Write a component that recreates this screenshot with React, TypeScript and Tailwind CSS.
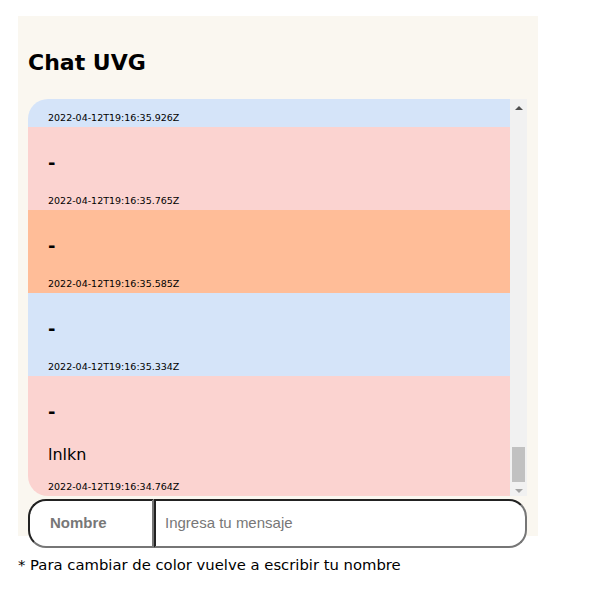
import React from 'react'

type Message = {
  name: string
  text?: string
  time: string
  color: string
}

const comic = { fontFamily: '"Comic Sans MS", "DejaVu Sans", sans-serif' }

const messages: Message[] = [
  { name: '-', time: '2022-04-12T19:16:35.926Z', color: 'bg-[#d5e4f9]' },
  { name: '-', time: '2022-04-12T19:16:35.765Z', color: 'bg-[#fbd3d0]' },
  { name: '-', time: '2022-04-12T19:16:35.585Z', color: 'bg-[#ffbd98]' },
  { name: '-', time: '2022-04-12T19:16:35.334Z', color: 'bg-[#d5e4f9]' },
  { name: '-', text: 'lnlkn', time: '2022-04-12T19:16:34.764Z', color: 'bg-[#fbd3d0]' },
]

const MessageRow = ({ msg }: { msg: Message }) => (
  <div className={`shrink-0 px-[20px] pt-[23px] pb-[3px] text-black ${msg.color}`}>
    <p className="text-[18px] font-bold leading-[25px]">{msg.name}</p>
    {msg.text && (
      <p className="mt-[20px] text-[16px] leading-[22px]">{msg.text}</p>
    )}
    <p className={`${msg.text ? 'mt-[15px]' : 'mt-[20px]'} text-[9.5px] leading-[12px]`}>
      {msg.time}
    </p>
  </div>
)

const ScrollBar = () => (
  <div className="flex w-[17px] shrink-0 flex-col items-center bg-[#f1f1f1]">
    <div className="flex h-[17px] w-full items-center justify-center">
      <div className="h-0 w-0 border-x-[4px] border-b-[4px] border-x-transparent border-b-[#505050]" />
    </div>
    <div className="flex flex-1 flex-col justify-end px-[2px] pb-[14px]">
      <div className="h-[35px] w-[13px] bg-[#c1c1c1]" />
    </div>
  </div>
)

export default function App() {
  return (
    <div className="min-h-screen bg-white" style={comic}>
      <div className="ml-[18px] mt-[16px] flex h-[520px] w-[520px] flex-col bg-[#faf7f0] pl-[10px] pr-[11px] pt-[32px]">
        <h1 className="text-[22px] font-bold leading-[30px] text-black">Chat UVG</h1>

        <div className="relative mt-[21px] flex h-[397px] shrink-0">
          <div className="flex flex-1 flex-col justify-end overflow-hidden rounded-l-[20px]">
            {messages.map((m, i) => (
              <MessageRow key={i} msg={m} />
            ))}
          </div>
          <ScrollBar />
          <div className="pointer-events-none absolute bottom-[3px] right-[4px] h-0 w-0 border-x-[4px] border-t-[4px] border-x-transparent border-t-[#a3a3a3]" />
        </div>

        <div
          className="mt-[3px] flex h-[49px] shrink-0"
          style={{ fontFamily: '"Liberation Sans", Arial, sans-serif' }}
        >
          <input
            placeholder="Nombre"
            className="w-[126px] rounded-l-[18px] border-2 border-b-[#767676] border-l-[#222] border-r-[#767676] border-t-[#222] bg-white pl-[20px] text-[15px] font-bold outline-none placeholder:text-[#777]"
          />
          <input
            placeholder="Ingresa tu mensaje"
            className="flex-1 rounded-r-[18px] border-2 border-b-[#767676] border-l-[#222] border-r-[#767676] border-t-[#222] bg-white pl-[9px] text-[15px] outline-none placeholder:text-[#777]"
          />
        </div>
      </div>

      <p className="ml-[18px] mt-[18px] text-[14.8px] leading-[22px] text-black">
        * Para cambiar de color vuelve a escribir tu nombre
      </p>
    </div>
  )
}
